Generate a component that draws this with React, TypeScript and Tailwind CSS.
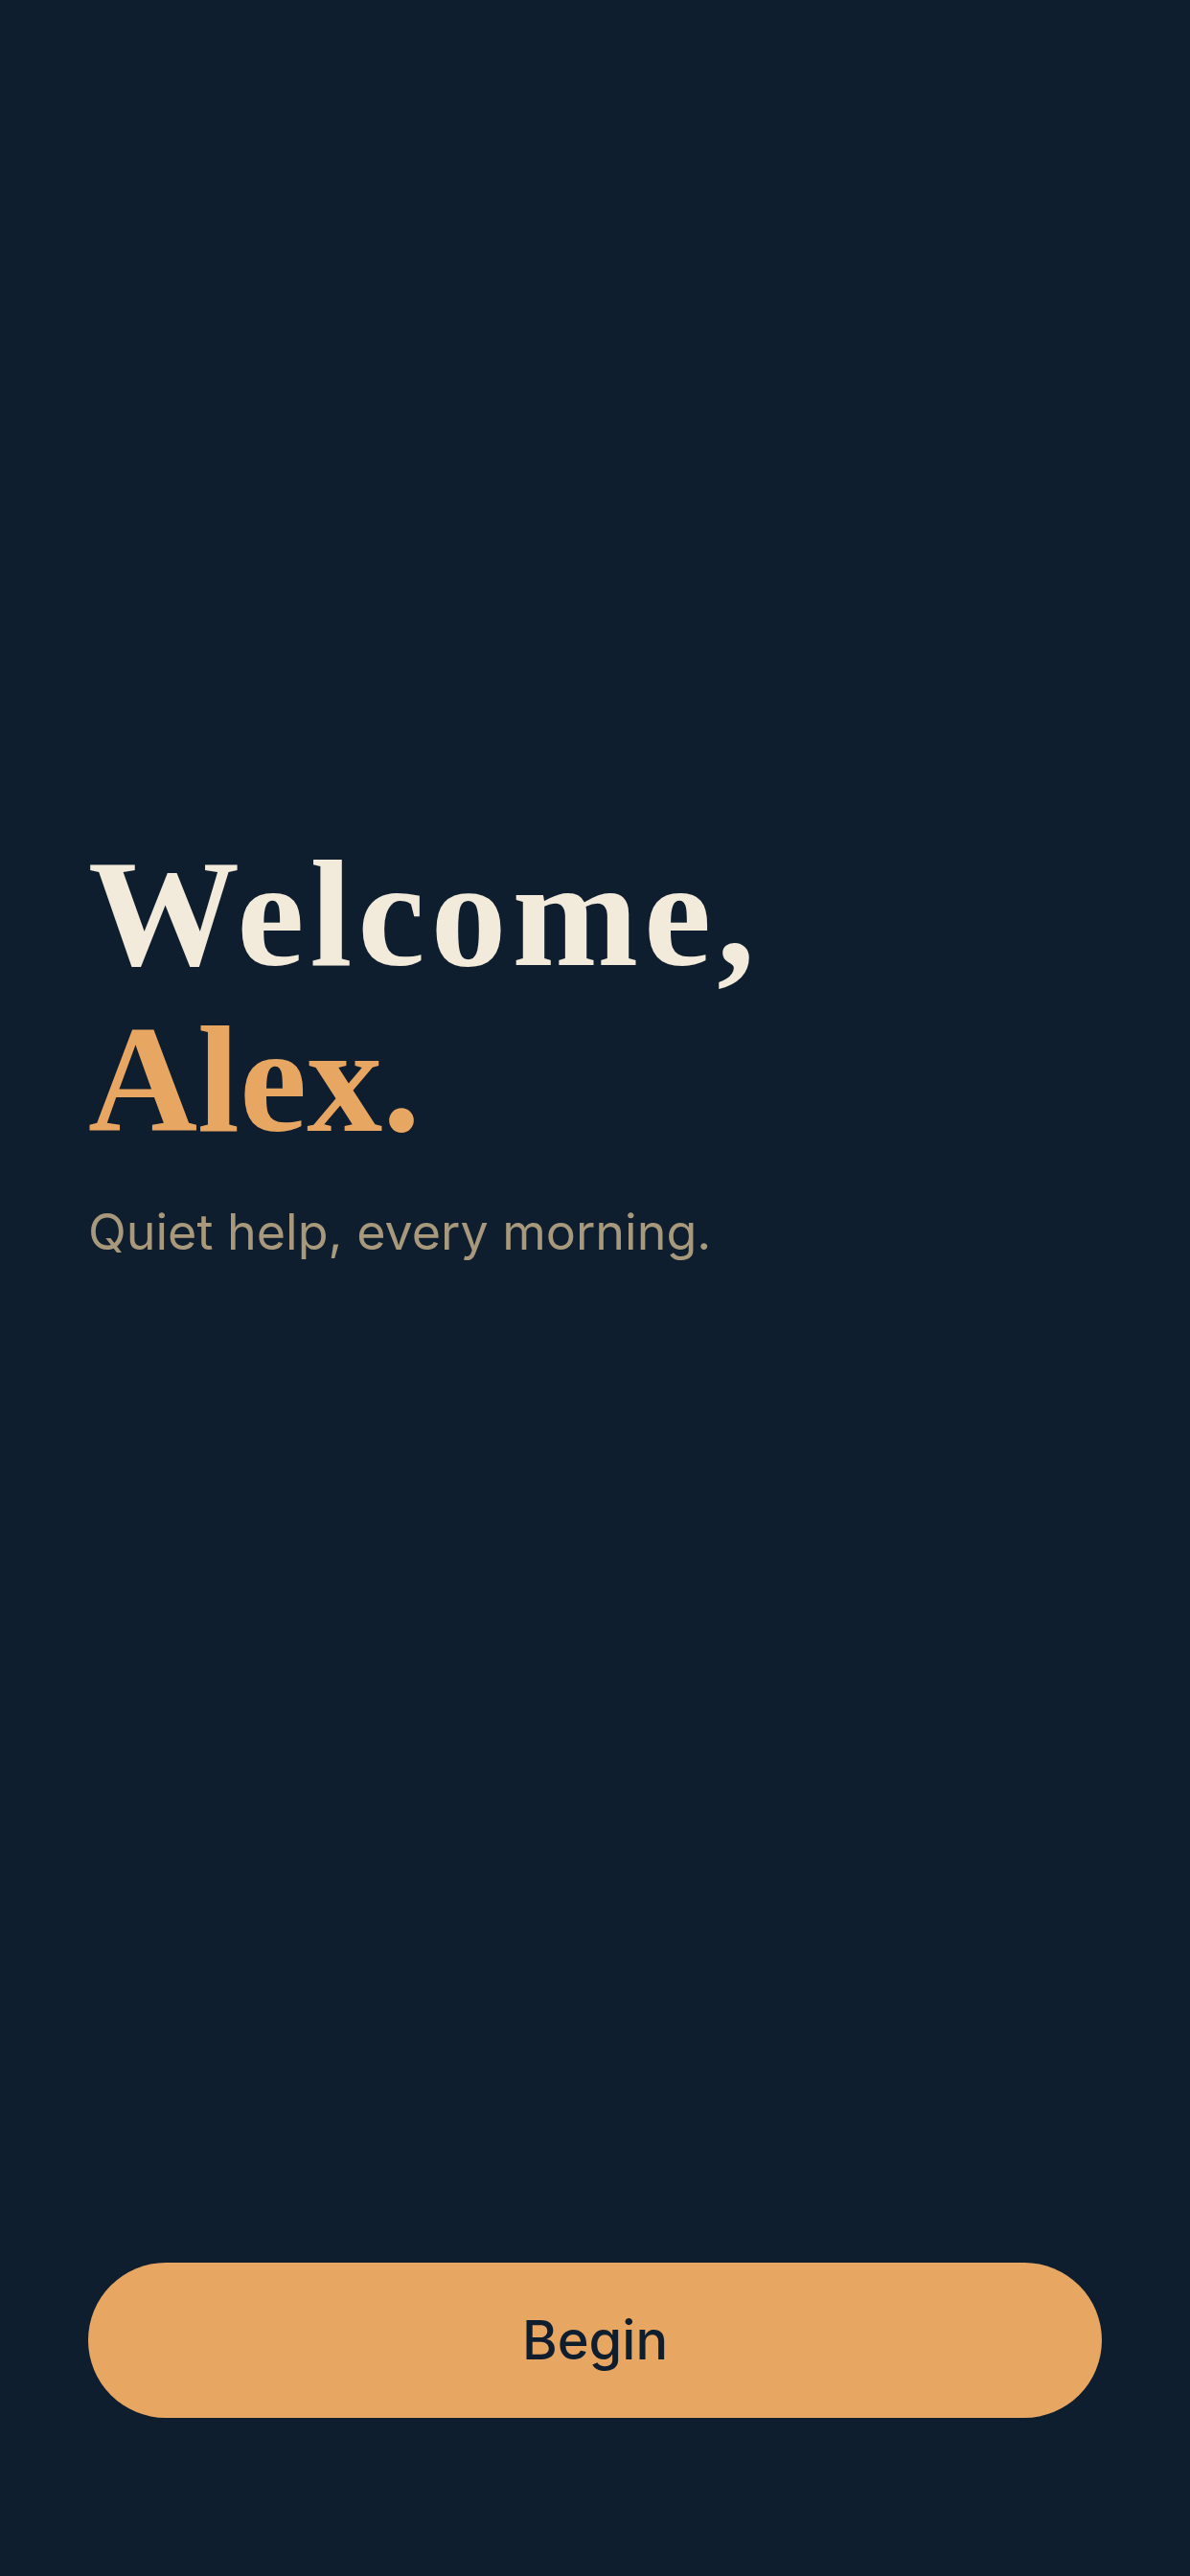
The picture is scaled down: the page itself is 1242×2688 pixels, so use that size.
export default function App() {
  return (
    <div className="flex h-[2688px] w-full flex-col bg-[#0f1e2e] px-[92px] pb-[165px] pt-[867px]">
      <div>
        <h1 className="font-['Liberation_Serif','Times_New_Roman',serif] text-[158px] font-bold leading-[173px] text-[#f2eadb]">
          <span className="tracking-[6px]">Welcome,</span>
          <br />
          <span className="text-[#e8a663]">Alex.</span>
        </h1>
        <p className="mt-[34px] font-['Inter','Noto_Sans',sans-serif] text-[52px] leading-[78px] text-[#a8997c]">
          Quiet help, every morning.
        </p>
      </div>

      <button className="mt-auto h-[162px] w-full rounded-full bg-[#e8a663] font-['Inter','Noto_Sans',sans-serif] text-[56px] font-medium text-[#0f1e2e]">
        Begin
      </button>
    </div>
  );
}
